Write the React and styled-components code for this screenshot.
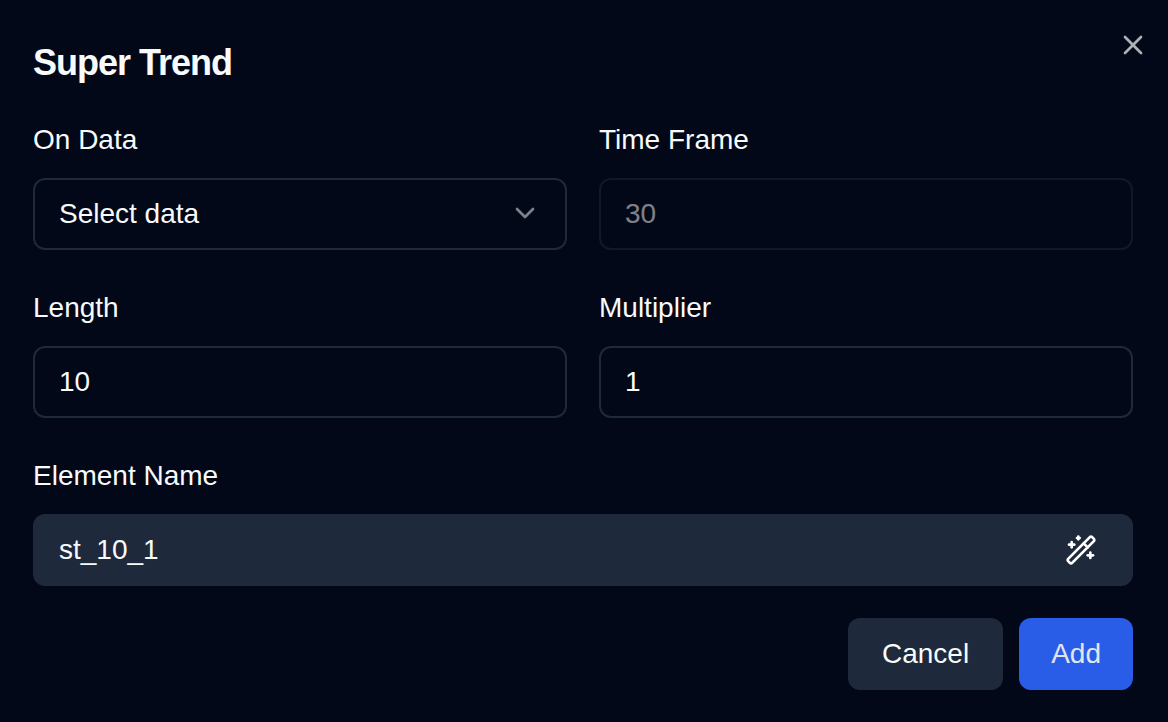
import React, { useState } from "react";
import styled, { createGlobalStyle, css } from "styled-components";
import { ChevronDown, WandSparkles, X } from "lucide-react";

const GlobalStyle = createGlobalStyle`
  *, *::before, *::after { box-sizing: border-box; }
  body {
    margin: 0;
    background: #020817;
    color: #f8fafc;
    font-family: "Liberation Sans", Arial, sans-serif;
  }
`;

const Dialog = styled.form`
  position: relative;
  display: flex;
  flex-direction: column;
  padding: 40px 35px 32px 33px;
`;

const Title = styled.h2`
  margin: 0 0 36px;
  font-size: 36px;
  line-height: 46px;
  font-weight: 600;
  letter-spacing: -1px;
`;

const CloseButton = styled.button`
  position: absolute;
  top: 29px;
  right: 19px;
  display: flex;
  padding: 0;
  border: 0;
  background: none;
  color: #f8fafc;
  opacity: 0.7;
  cursor: pointer;
`;

const Fields = styled.div`
  display: grid;
  grid-template-columns: 1fr 1fr;
  gap: 40px 32px;
`;

const Field = styled.div`
  display: flex;
  flex-direction: column;
  gap: 20px;
  grid-column: ${({ $wide }) => ($wide ? "1 / -1" : "auto")};
`;

const Label = styled.label`
  font-size: 28px;
  line-height: 36px;
`;

const control = css`
  width: 100%;
  height: 72px;
  padding: 0 24px;
  border: 2px solid #1e293b;
  border-radius: 12px;
  background: #020817;
  color: #f8fafc;
  font: inherit;
  font-size: 28px;
`;

const Input = styled.input`
  ${control}
  &:disabled { opacity: 0.5; }
`;

const NameInput = styled.input`
  ${control}
  padding-right: 88px;
  background: #1e293b;
`;

const Select = styled.select`
  ${control}
  padding-bottom: 2px;
  appearance: none;
`;

const ControlWrap = styled.div`
  position: relative;
`;

const SelectIcon = styled(ChevronDown)`
  position: absolute;
  top: 19px;
  right: 26px;
  opacity: 0.5;
  pointer-events: none;
`;

const WandButton = styled.button`
  position: absolute;
  top: 20px;
  right: 36px;
  display: flex;
  padding: 0;
  border: 0;
  background: none;
  color: #ffffff;
  cursor: pointer;
`;

const Actions = styled.div`
  display: flex;
  justify-content: flex-end;
  gap: 16px;
  margin-top: 32px;
`;

const Button = styled.button`
  height: 72px;
  padding: 0 ${({ $primary }) => ($primary ? 32 : 34)}px;
  border: 0;
  border-radius: 12px;
  background: ${({ $primary }) => ($primary ? "#295de7" : "#1e293b")};
  color: ${({ $primary }) => ($primary ? "#e2e5ec" : "#f8fafc")};
  font: inherit;
  font-size: 28px;
  cursor: pointer;
`;

export default function App() {
  const [length, setLength] = useState("10");
  const [multiplier, setMultiplier] = useState("1");
  const [name, setName] = useState("st_10_1");

  return (
    <>
      <GlobalStyle />
      <Dialog onSubmit={(e) => e.preventDefault()}>
        <Title>Super Trend</Title>
        <CloseButton type="button" aria-label="Close">
          <X size={32} />
        </CloseButton>
        <Fields>
          <Field>
            <Label htmlFor="data">On Data</Label>
            <ControlWrap>
              <Select id="data" defaultValue="">
                <option value="">Select data</option>
              </Select>
              <SelectIcon size={32} />
            </ControlWrap>
          </Field>
          <Field>
            <Label htmlFor="timeframe">Time Frame</Label>
            <Input id="timeframe" value="30" disabled readOnly />
          </Field>
          <Field>
            <Label htmlFor="length">Length</Label>
            <Input id="length" value={length} onChange={(e) => setLength(e.target.value)} />
          </Field>
          <Field>
            <Label htmlFor="multiplier">Multiplier</Label>
            <Input id="multiplier" value={multiplier} onChange={(e) => setMultiplier(e.target.value)} />
          </Field>
          <Field $wide>
            <Label htmlFor="name">Element Name</Label>
            <ControlWrap>
              <NameInput id="name" value={name} onChange={(e) => setName(e.target.value)} />
              <WandButton type="button" aria-label="Generate name">
                <WandSparkles size={32} />
              </WandButton>
            </ControlWrap>
          </Field>
        </Fields>
        <Actions>
          <Button type="button">Cancel</Button>
          <Button type="submit" $primary>Add</Button>
        </Actions>
      </Dialog>
    </>
  );
}
